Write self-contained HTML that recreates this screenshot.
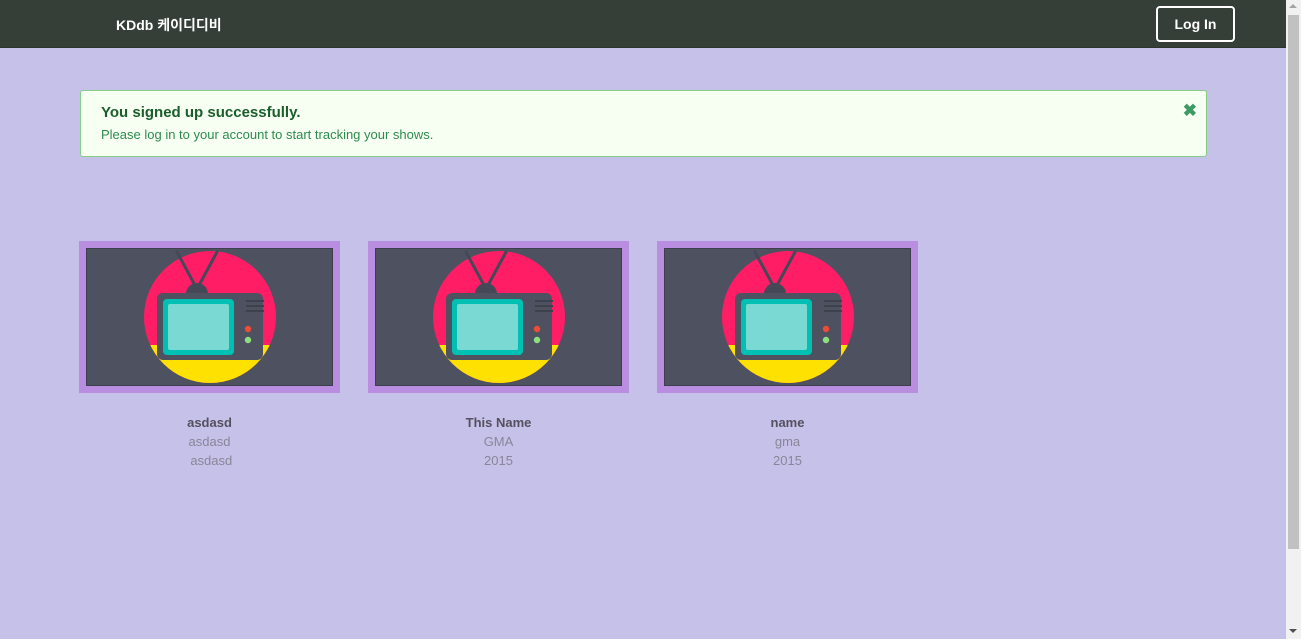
<!DOCTYPE html>
<html><head><meta charset="utf-8"><style>
*{margin:0;padding:0;box-sizing:border-box}
body{width:1301px;height:639px;overflow:hidden;background:#c6c1e8;font-family:"Liberation Sans","Noto Sans CJK KR",sans-serif;position:relative}
.nav{position:absolute;left:0;top:0;width:1286px;height:48px;background:#353f37;border-bottom:1px solid #2c342e}
.brand{position:absolute;left:116px;top:15px;color:#fff;font-weight:bold;font-size:14px}
.login{position:absolute;left:1156px;top:6px;width:79px;height:36px;border:2px solid #fff;border-radius:4px;color:#fff;font-weight:bold;font-size:14px;text-align:center;line-height:32px}
.sb{position:absolute;left:1286px;top:0;width:15px;height:639px;background:#f1f1f1}
.thumb{position:absolute;left:1288px;top:15px;width:11px;height:534px;background:#c1c1c1}
.alert{position:absolute;left:80px;top:90px;width:1127px;height:67px;background:#f6fff2;border:1px solid #86cd86;border-radius:3px}
.alert h4{position:absolute;left:20px;top:13px;font-size:15px;color:#1b5e2b;font-weight:bold}
.alert p{position:absolute;left:20px;top:36px;font-size:13px;color:#2e8b4f}
.x{position:absolute;right:9px;top:10px;color:#3e9a63;font-weight:bold;font-size:17px}
.card{position:absolute;top:241px;width:261px;height:152px;background:#b98ddf;padding:7px}
.card svg{display:block;border:1px solid #3d404c}
.t{position:absolute;top:413px;width:261px;text-align:center;font-size:13px;line-height:19px;color:#8a8598}
.t b{color:#55505f}
</style></head><body>
<div class="nav"><div class="brand">KDdb 케이디디비</div><div class="login">Log In</div></div>
<div class="sb"></div><div class="thumb"></div>
<div style="position:absolute;left:1289px;top:4px;width:0;height:0;border-left:4px solid transparent;border-right:4px solid transparent;border-bottom:4px solid #a3a3a3"></div>
<div style="position:absolute;left:1289px;top:629px;width:0;height:0;border-left:4px solid transparent;border-right:4px solid transparent;border-top:4px solid #505050"></div>
<div class="alert"><h4>You signed up successfully.</h4><p>Please log in to your account to start tracking your shows.</p><div class="x">✖</div></div>
<svg width="0" height="0" style="position:absolute"><defs>
<clipPath id="c"><circle cx="123" cy="68" r="66"/></clipPath>
<g id="tv">
<rect x="0" y="0" width="247" height="138" fill="#4e5160"/>
<g clip-path="url(#c)"><rect x="0" y="0" width="247" height="138" fill="#ff1e66"/><rect x="0" y="96" width="247" height="50" fill="#ffe100"/></g>
<line x1="110" y1="40" x2="90" y2="3" stroke="#454856" stroke-width="3" stroke-linecap="round"/>
<line x1="110" y1="40" x2="130" y2="3" stroke="#454856" stroke-width="3" stroke-linecap="round"/>
<path d="M99 45 A11 11 0 0 1 121 45 Z" fill="#454856"/>
<rect x="70" y="44" width="106" height="67" rx="6" fill="#4e5160"/>
<rect x="76" y="50" width="71" height="56" rx="4" fill="#00bfb3"/>
<rect x="81" y="55" width="61" height="46" rx="2" fill="#7bd9d3"/>
<rect x="159" y="51" width="18" height="2" fill="#3e404c"/><rect x="159" y="56" width="18" height="2" fill="#3e404c"/><rect x="159" y="61" width="18" height="2" fill="#3e404c"/>
<circle cx="161" cy="80" r="3.2" fill="#f04b34"/><circle cx="161" cy="91" r="3.2" fill="#8ee07f"/>
</g></defs></svg>
<div class="card" style="left:79px"><svg width="247" height="138"><use href="#tv"/></svg></div>
<div class="card" style="left:368px"><svg width="247" height="138"><use href="#tv"/></svg></div>
<div class="card" style="left:657px"><svg width="247" height="138"><use href="#tv"/></svg></div>
<div class="t" style="left:79px"><b>asdasd</b><br>asdasd<br>&nbsp;asdasd</div>
<div class="t" style="left:368px"><b>This Name</b><br>GMA<br>2015</div>
<div class="t" style="left:657px"><b>name</b><br>gma<br>2015</div>
</body></html>
